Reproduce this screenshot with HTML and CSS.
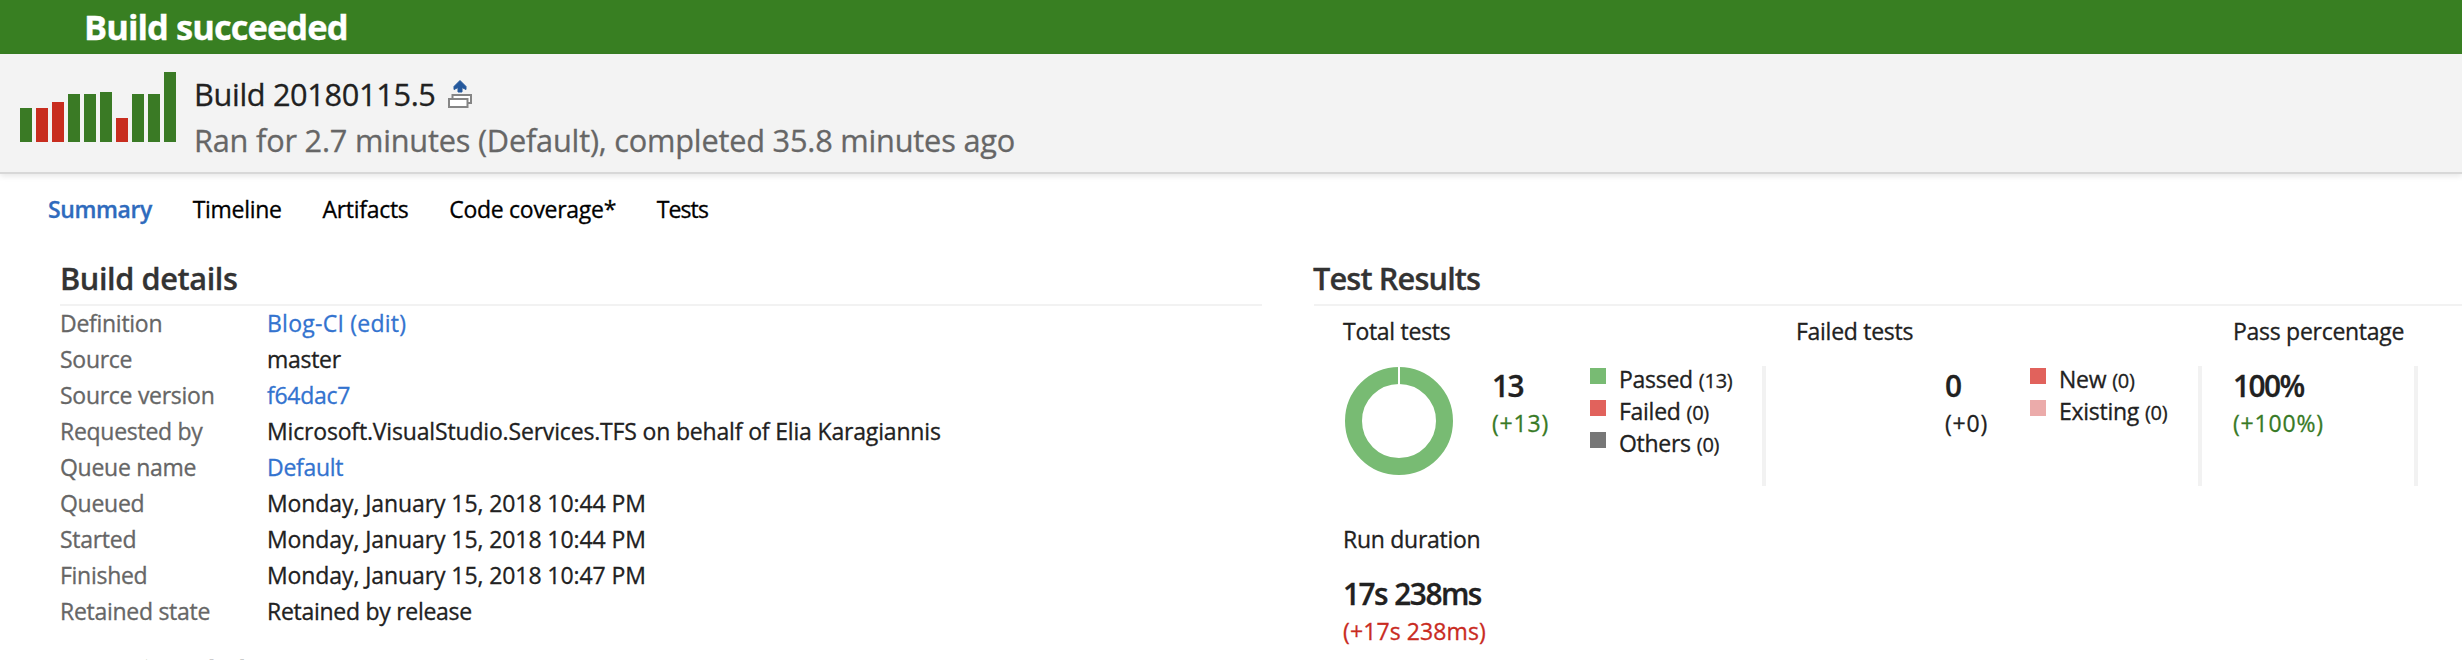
FILE: index.html
```
<!DOCTYPE html>
<html lang="en">
<head>
<meta charset="utf-8">
<title>Build 20180115.5</title>
<link rel="stylesheet" href="styles.css">
</head>
<body>
<header class="status">Build succeeded</header>
<section class="overview">
  <svg class="history" width="156" height="70" viewBox="0 0 156 70" shape-rendering="crispEdges">
    <g fill="#3a7a25">
      <rect x="0" y="36" width="12" height="34"/>
      <rect x="48" y="22" width="12" height="48"/>
      <rect x="64" y="22" width="12" height="48"/>
      <rect x="80" y="20" width="12" height="50"/>
      <rect x="112" y="22" width="12" height="48"/>
      <rect x="128" y="22" width="12" height="48"/>
      <rect x="144" y="0" width="12" height="70"/>
    </g>
    <g fill="#c82d1f">
      <rect x="16" y="36" width="12" height="34"/>
      <rect x="32" y="30" width="12" height="40"/>
      <rect x="96" y="46" width="12" height="24"/>
    </g>
  </svg>
  <div class="overview-text">
    <div class="build-name"><span class="build-number">Build 20180115.5</span>
      <svg class="retain" width="28" height="32" viewBox="0 0 28 32">
        <path d="M14 2.5 L20 8.5 V11.5 L16 9.5 V14 H12 V9.5 L8 11.5 V8.5 Z" fill="#24589c" stroke="#24589c" stroke-width="1" stroke-linejoin="round"/>
        <rect x="6.5" y="17" width="18.5" height="8" fill="#fff" stroke="#858585" stroke-width="2"/>
        <rect x="3" y="21" width="18.5" height="8" fill="#fff" stroke="#858585" stroke-width="2"/>
      </svg>
    </div>
    <div class="build-run">Ran for 2.7 minutes (Default), completed 35.8 minutes ago</div>
  </div>
</section>
<nav class="tabs">
  <a class="tab tab-active">Summary</a>
  <a class="tab">Timeline</a>
  <a class="tab">Artifacts</a>
  <a class="tab">Code coverage*</a>
  <a class="tab tab-tests">Tests</a>
</nav>
<main class="columns">
  <section class="details">
    <h2 class="heading">Build details</h2>
    <dl class="fields">
      <dt>Definition</dt><dd class="link definition">Blog-CI (edit)</dd>
      <dt>Source</dt><dd>master</dd>
      <dt>Source version</dt><dd class="link">f64dac7</dd>
      <dt>Requested by</dt><dd class="requester">Microsoft.VisualStudio.Services.TFS on behalf of Elia Karagiannis</dd>
      <dt>Queue name</dt><dd class="link">Default</dd>
      <dt>Queued</dt><dd class="date">Monday, January 15, 2018 10:44 PM</dd>
      <dt>Started</dt><dd class="date">Monday, January 15, 2018 10:44 PM</dd>
      <dt>Finished</dt><dd class="date">Monday, January 15, 2018 10:47 PM</dd>
      <dt>Retained state</dt><dd>Retained by release</dd>
    </dl>
    <h2 class="heading heading-next">Associated changes</h2>
  </section>
  <section class="results">
    <h2 class="heading heading-results">Test Results</h2>
    <div class="cards">
      <div class="card card-total">
        <div class="label">Total tests</div>
        <div class="card-body">
          <svg class="donut" width="110" height="110" viewBox="0 0 110 110">
            <circle cx="55" cy="55" r="45.5" fill="none" stroke="#78bb73" stroke-width="17"/>
            <rect x="54" y="0" width="2" height="19" fill="#fff"/>
          </svg>
          <div class="figures"><div class="value">13</div><div class="delta good">(+13)</div></div>
          <ul class="legend">
            <li><i class="swatch passed"></i>Passed <small>(13)</small></li>
            <li><i class="swatch failed"></i>Failed <small>(0)</small></li>
            <li><i class="swatch others"></i>Others <small>(0)</small></li>
          </ul>
        </div>
      </div>
      <div class="card card-failed">
        <div class="label">Failed tests</div>
        <div class="card-body">
          <div class="figures"><div class="value">0</div><div class="delta">(+0)</div></div>
          <ul class="legend">
            <li><i class="swatch failed"></i>New <small>(0)</small></li>
            <li><i class="swatch existing"></i>Existing <small>(0)</small></li>
          </ul>
        </div>
      </div>
      <div class="card card-pass">
        <div class="label">Pass percentage</div>
        <div class="card-body">
          <div class="figures"><div class="value">100%</div><div class="delta good">(+100%)</div></div>
        </div>
      </div>
    </div>
    <div class="duration">
      <div class="label">Run duration</div>
      <div class="duration-body"><div class="value">17s 238ms</div><div class="delta bad">(+17s 238ms)</div></div>
    </div>
  </section>
</main>
</body>
</html>
```
FILE: styles.css
```
* { box-sizing: border-box; }
body {
  margin: 0;
  height: 660px;
  overflow: hidden;
  background: #fff;
  color: #212121;
  font: 23px/30px "Open Sans", "Noto Sans", sans-serif;
  letter-spacing: -0.28px;
  white-space: nowrap;
  -webkit-text-stroke: 0.3px currentColor;
}
h2, dl, dd, ul { margin: 0; padding: 0; }

.status {
  height: 54px;
  padding-left: 84px;
  background: #387f22;
  color: #fff;
  font-size: 34.5px;
  font-weight: 700;
  letter-spacing: -0.95px;
  line-height: 54px;
}
.overview {
  display: flex;
  height: 120px;
  padding: 17px 0 0 20px;
  background: #f3f3f3;
  border-bottom: 2px solid #d8d8d8;
  box-shadow: 0 2px 6px rgba(0, 0, 0, .1);
}
.history { margin-top: 1px; }
.overview-text {
  margin-left: 18px;
  font-size: 30.7px;
  line-height: 46px;
}
.build-name { display: flex; height: 46px; letter-spacing: -0.33px; }
.retain { margin: 7px 0 0 10px; }
.build-run { color: #666; letter-spacing: -0.19px; }

.tabs {
  display: flex;
  gap: 40.7px;
  padding: 13px 0 0 48px;
  color: #000;
  line-height: 44px;
}
.tab-active { color: #2f6bbd; font-weight: 600; letter-spacing: -0.4px; }
.tab-tests { letter-spacing: -0.9px; }

.columns {
  display: flex;
  gap: 52px;
  padding: 26px 0 0 60px;
}
.details { width: 1202px; }
.results { flex: 1; }
.heading {
  height: 49px;
  border-bottom: 2px solid #f2f2f2;
  color: #333;
  font-size: 30.7px;
  font-weight: 600;
  letter-spacing: -0.4px;
  line-height: 42px;
}
.heading-results { letter-spacing: -0.85px; text-indent: -1px; }
.heading-next { height: 10px; margin-top: 22px; border: 0; overflow: hidden; }
.fields {
  display: grid;
  grid-template-columns: 207px 1fr;
  row-gap: 2px;
  line-height: 34px;
}
.fields dt { color: #666; }
.fields .link { color: #3373cf; }
.definition { letter-spacing: 0.25px; }
.requester { letter-spacing: -0.17px; }
.date { letter-spacing: -0.09px; }

.cards { display: flex; padding: 10px 0 0 29px; }
.card-total { width: 423px; margin-right: 30px; }
.card-failed { width: 406px; margin-right: 31px; }
.card-pass { width: 185px; }
.card-body {
  display: flex;
  height: 120px;
  margin-top: 20px;
  border-right: 4px solid #f2f2f2;
}
.donut { margin-left: 1px; }
.card-total .figures { width: 98px; margin-left: 38px; }
.card-failed .figures { width: 85px; margin-left: 149px; }
.value {
  font-size: 29.8px;
  font-weight: 600;
  letter-spacing: -1.5px;
  word-spacing: 1px;
  line-height: 40px;
}
.delta { margin-top: 2px; letter-spacing: 0.8px; }
.good { color: #387a26; }
.bad { color: #c92b1f; letter-spacing: 0.1px; }
.legend {
  display: flex;
  flex-direction: column;
  gap: 6px;
  line-height: 26px;
  list-style: none;
}
.legend li { display: flex; height: 26px; align-items: baseline; }
.legend small { margin-left: 6px; font-size: 20px; }
.swatch { align-self: flex-start; width: 16px; height: 16px; margin: 2px 13px 0 0; }
.passed { background: #78bb73; }
.failed { background: #e1625c; }
.others { background: #777; }
.existing { background: #ebabaa; }
.duration { padding: 38px 0 0 29px; }
.duration-body { margin-top: 20px; }
```
